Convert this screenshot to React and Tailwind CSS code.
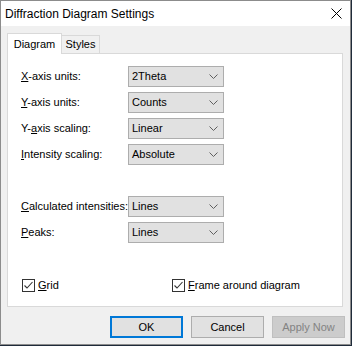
import { useState } from 'react'

function Chevron() {
  return (
    <svg width="9" height="5" viewBox="0 0 9 5" className="shrink-0">
      <polyline points="0.5,0.5 4.5,4.5 8.5,0.5" fill="none" stroke="#606060" strokeWidth="1" />
    </svg>
  )
}

function Combo({ value }) {
  return (
    <div className="w-[96px] h-[21px] bg-[#e1e1e1] border border-[#adadad] flex items-center justify-between pl-[3px] pr-[5px]">
      <span>{value}</span>
      <Chevron />
    </div>
  )
}

function Check({ checked }) {
  return (
    <div className="w-[13px] h-[13px] bg-white border border-[#333333] flex items-center justify-center">
      {checked && (
        <svg width="11" height="11" viewBox="0 0 11 11">
          <polyline points="1.5,5.5 4,8 9.5,2" fill="none" stroke="#333333" strokeWidth="1.1" />
        </svg>
      )}
    </div>
  )
}

function Row({ label, value }) {
  return (
    <div className="flex items-center h-[21px]">
      <div className="w-[107px]">{label}</div>
      <Combo value={value} />
    </div>
  )
}

export default function App() {
  const [grid, setGrid] = useState(true)
  const [frame, setFrame] = useState(true)

  return (
    <div className="w-[352px] h-[346px] bg-[#1f2b3a] font-['Liberation_Sans',Arial,sans-serif] text-[11px] text-black leading-none">
      <div className="w-[351px] h-[345px] border border-[#8c8c8c] bg-[#f0f0f0] flex flex-col">
        {/* title bar */}
        <div className="h-[25px] bg-white flex items-center justify-between pl-[4px] pr-[8px] shrink-0">
          <span className="text-[12px]">Diffraction Diagram Settings</span>
          <svg width="11" height="11" viewBox="0 0 11 11">
            <path d="M0.5 0.5L10.5 10.5M10.5 0.5L0.5 10.5" stroke="#000" strokeWidth="1" />
          </svg>
        </div>

        <div className="flex flex-col pl-[6px] pr-[7px] pt-[7px]">
          {/* tabs */}
          <div className="flex items-end h-[20px]">
            <div className="relative z-10 w-[55px] h-[21px] -mb-px bg-white border border-b-0 border-[#d9d9d9] flex items-center justify-center">
              Diagram
            </div>
            <div className="w-[38px] h-[18px] bg-[#f0f0f0] border border-l-0 border-b-0 border-[#d9d9d9] flex items-center justify-center">
              Styles
            </div>
          </div>

          {/* panel */}
          <div className="h-[254px] bg-white border border-[#d9d9d9] flex flex-col pl-[13px] pt-[12px]">
            <div className="flex flex-col gap-[5px]">
              <Row label={<><u>X</u>-axis units:</>} value="2Theta" />
              <Row label={<><u>Y</u>-axis units:</>} value="Counts" />
              <Row label={<>Y-<u>a</u>xis scaling:</>} value="Linear" />
              <Row label={<><u>I</u>ntensity scaling:</>} value="Absolute" />
            </div>
            <div className="flex flex-col gap-[5px] mt-[31px]">
              <Row label={<><u>C</u>alculated intensities:</>} value="Lines" />
              <Row label={<><u>P</u>eaks:</>} value="Lines" />
            </div>
            <div className="flex items-center mt-[36px] pl-[1px]">
              <div className="flex items-center w-[150px] gap-[3px] cursor-default" onClick={() => setGrid(!grid)}>
                <Check checked={grid} />
                <span><u>G</u>rid</span>
              </div>
              <div className="flex items-center gap-[3px] cursor-default" onClick={() => setFrame(!frame)}>
                <Check checked={frame} />
                <span><u>F</u>rame around diagram</span>
              </div>
            </div>
          </div>

          {/* buttons */}
          <div className="flex justify-end gap-[8px] mt-[9px] -mr-[2px]">
            <button className="w-[73px] h-[22px] bg-[#e1e1e1] border-2 border-[#0078d7]">OK</button>
            <button className="w-[73px] h-[22px] bg-[#e1e1e1] border border-[#adadad]">Cancel</button>
            <button disabled className="w-[73px] h-[22px] bg-[#cccccc] border border-[#bfbfbf] text-[#838383]">Apply Now</button>
          </div>
        </div>
      </div>
    </div>
  )
}
